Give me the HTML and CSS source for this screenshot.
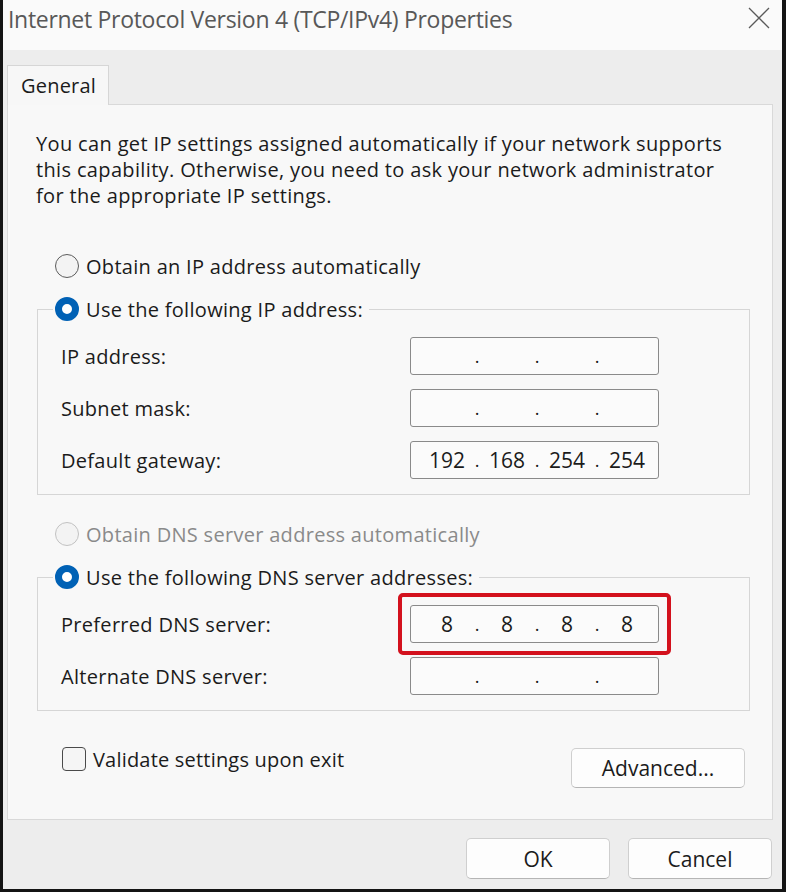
FILE: index.html
```html
<!DOCTYPE html>
<html>
    <head>
        <meta charset="UTF-8">
        <meta name="viewport" content="width=device-width, initial-scale=1.0">
        <title>Internet Protocol Version 4 (TCP/IPv4) Properties</title>
        <link rel="stylesheet" href="styles.css">
    </head>
    <body>
        <div class="window">
            <div class="titlebar">
                <span class="title">Internet Protocol Version 4 (TCP/IPv4) Properties</span>
                <svg class="close" width="22" height="22" viewBox="0 0 22 22">
                    <path d="M1 1 L21 21 M21 1 L1 21" stroke="#5a5a5a" stroke-width="1.3" fill="none"/>
                </svg>
            </div>
            <div class="tabs">
                <div class="tab">General</div>
            </div>
            <div class="panel">
                <p class="intro">You can get IP settings assigned automatically if your network supports<br>this capability. Otherwise, you need to ask your network administrator<br>for the appropriate IP settings.</p>

                <div class="radio-row"><span class="radio"></span>Obtain an IP address automatically</div>

                <fieldset class="group">
                    <legend><span class="radio checked"></span>Use the following IP address:</legend>
                    <div class="field">
                        <span class="label">IP address:</span>
                        <div class="ip"><span></span><i>.</i><span></span><i>.</i><span></span><i>.</i><span></span></div>
                    </div>
                    <div class="field">
                        <span class="label">Subnet mask:</span>
                        <div class="ip"><span></span><i>.</i><span></span><i>.</i><span></span><i>.</i><span></span></div>
                    </div>
                    <div class="field">
                        <span class="label">Default gateway:</span>
                        <div class="ip"><span>192</span><i>.</i><span>168</span><i>.</i><span>254</span><i>.</i><span>254</span></div>
                    </div>
                </fieldset>

                <div class="radio-row disabled"><span class="radio"></span>Obtain DNS server address automatically</div>

                <fieldset class="group">
                    <legend><span class="radio checked"></span>Use the following DNS server addresses:</legend>
                    <div class="field">
                        <span class="label">Preferred DNS server:</span>
                        <!-- red box drawn round the changed value -->
                        <div class="mark">
                            <div class="ip"><span>8</span><i>.</i><span>8</span><i>.</i><span>8</span><i>.</i><span>8</span></div>
                        </div>
                    </div>
                    <div class="field">
                        <span class="label">Alternate DNS server:</span>
                        <div class="ip"><span></span><i>.</i><span></span><i>.</i><span></span><i>.</i><span></span></div>
                    </div>
                </fieldset>

                <div class="panel-foot">
                    <label class="check"><span class="box"></span>Validate settings upon exit</label>
                    <button class="btn advanced">Advanced...</button>
                </div>
            </div>
            <div class="actions">
                <button class="btn">OK</button>
                <button class="btn">Cancel</button>
            </div>
        </div>
    </body>
</html>
```

FILE: styles.css
```css
body{
    margin: 0;
    background-color: #111;
    font-family: 'Open Sans', 'Noto Sans', sans-serif;
    color: #1b1b1b;
}
.window{
    width: 779px;
    height: 889px;
    border-left: 3px solid #141414;
    border-right: 4px solid #141414;
    border-bottom: 3px solid #141414;
    background-color: #ededed;
    display: flex;
    flex-direction: column;
}
.titlebar{
    height: 50px;
    background-color: #fafafa;
    display: flex;
    align-items: flex-start;
    justify-content: space-between;
}
.title{
    font-size: 23px;
    line-height: 32px;
    margin: 3px 0 0 5px;
    color: #585858;
    letter-spacing: -0.3px;
}
.close{
    margin: 7px 12px 0 0;
}
.tabs{
    height: 54px;
    display: flex;
    align-items: flex-end;
    padding-left: 4px;
}
.tab{
    width: 102px;
    height: 40px;
    margin-bottom: -1px;
    border: 1px solid #d6d6d6;
    border-bottom: none;
    background-color: #f7f7f7;
    font-size: 20px;
    line-height: 40px;
    padding-left: 13px;
    box-sizing: border-box;
    letter-spacing: 0.2px;
    position: relative;
}
.panel{
    height: 716px;
    box-sizing: border-box;
    margin: 0 9px 0 4px;
    border: 1px solid #d9d9d9;
    background-color: #f8f8f8;
    padding-top: 26px;
}
.intro{
    margin: 0 0 0 28px;
    font-size: 20px;
    line-height: 26px;
    letter-spacing: 0.35px;
}
.radio-row{
    display: flex;
    align-items: center;
    height: 30px;
    margin: 42px 0 0 47px;
    font-size: 20px;
    letter-spacing: 0.3px;
}
.radio-row.disabled{
    margin-top: 24px;
    color: #8a8a8a;
}
.radio{
    width: 24px;
    height: 24px;
    box-sizing: border-box;
    border: 1.5px solid #5c5c5c;
    border-radius: 50%;
    background-color: #f3f3f3;
    margin-right: 7px;
    flex-shrink: 0;
}
.disabled .radio{
    border-color: #c2c2c2;
}
.radio.checked{
    border: 7px solid #0061b5;
    background-color: #fff;
}
.group{
    margin: 13px 22px 0 29px;
    padding: 13px 0 15px 23px;
    border: 1px solid #d6d6d6;
    min-width: 0;
}
.group legend{
    display: flex;
    align-items: center;
    height: 30px;
    margin-left: -8px;
    padding: 0 6px 0 2px;
    font-size: 20px;
    letter-spacing: 0.3px;
}
.field{
    display: flex;
    align-items: center;
    height: 38px;
    font-size: 20px;
    letter-spacing: 0.3px;
}
.field + .field{
    margin-top: 14px;
}
.label{
    width: 349px;
}
.ip{
    width: 249px;
    height: 38px;
    box-sizing: border-box;
    border: 1px solid #8a8a8a;
    border-radius: 3px;
    background-color: #fbfbfb;
    display: flex;
    align-items: center;
    padding-left: 10px;
    font-size: 21px;
    letter-spacing: 0;
}
.ip span{
    width: 52px;
    text-align: center;
}
.ip i{
    width: 8px;
    text-align: center;
    font-style: normal;
    font-size: 18px;
}
.mark{
    margin: -12px;
    padding: 8px;
    border: 4px solid #d3111d;
    border-radius: 5px;
}
.panel-foot{
    display: flex;
    justify-content: space-between;
    align-items: flex-start;
    margin: 33px 27px 0 54px;
}
.check{
    display: flex;
    align-items: center;
    height: 30px;
    font-size: 20px;
    letter-spacing: 0.2px;
}
.box{
    width: 24px;
    height: 24px;
    box-sizing: border-box;
    border: 1.5px solid #4a4a4a;
    border-radius: 4px;
    background-color: #f5f5f5;
    margin-right: 7px;
}
.btn{
    font-family: 'Open Sans', 'Noto Sans', sans-serif;
    font-size: 21px;
    color: #1b1b1b;
    background-color: #fdfdfd;
    border: 1px solid #cfcfcf;
    border-bottom-color: #b5b5b5;
    border-radius: 5px;
    height: 41px;
    width: 144px;
    padding: 0;
    letter-spacing: 0;
}
.btn.advanced{
    width: 174px;
    height: 40px;
    margin-top: 4px;
}
.actions{
    display: flex;
    justify-content: flex-end;
    gap: 18px;
    padding: 18px 10px 0 0;
}
```
